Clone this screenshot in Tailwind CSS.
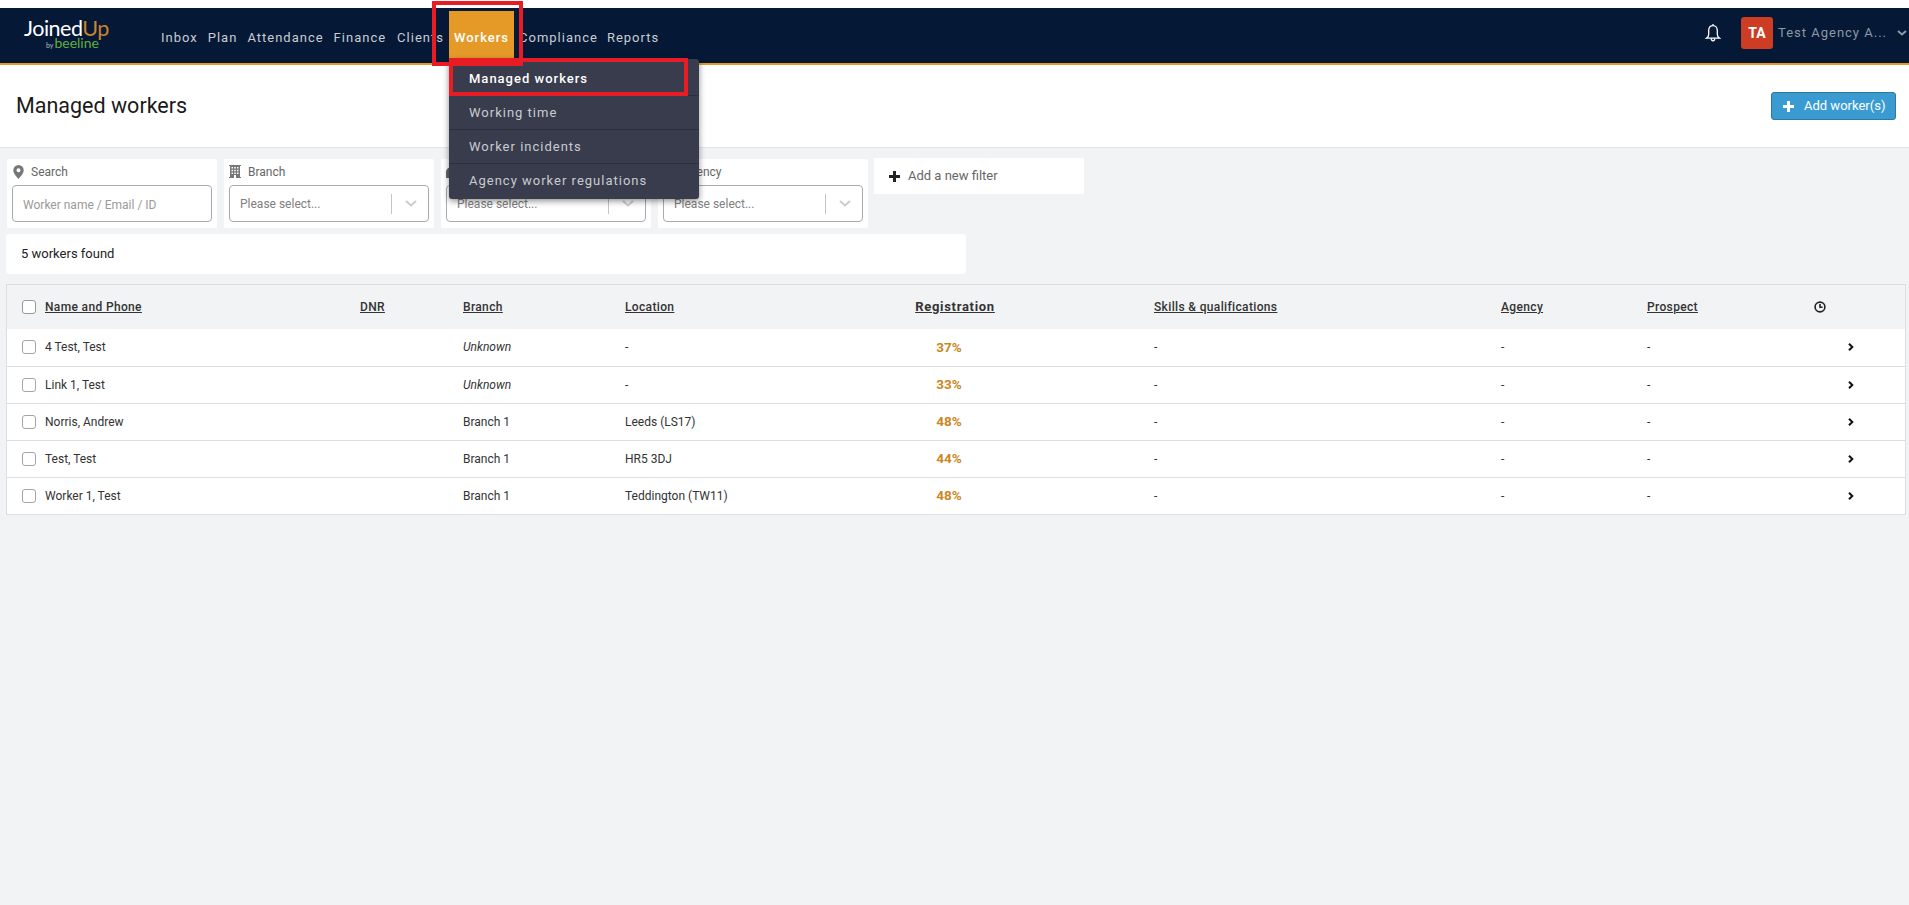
<!DOCTYPE html>
<html lang="en">
<head>
<meta charset="utf-8">
<title>Managed workers</title>
<script src="https://cdn.jsdelivr.net/npm/@tailwindcss/browser@4"></script>
</head>
<body class="relative h-[905px] overflow-hidden bg-[#f2f3f5] font-['Roboto',sans-serif] text-[12px] text-[#333]">

<div class="bg-white pt-[8px]">
  <header class="flex h-[57px] items-start border-b-2 border-[#e59a28] bg-[#051937]">
    <div class="w-[156px] shrink-0 pl-[24px] pt-[8px] font-['Lato',sans-serif]">
      <div class="text-[21.500px] leading-[24px] tracking-[-0.5px] text-white">Joined<span class="text-[#c9822e]">Up</span></div>
      <div class="ml-[22px] -mt-[3px] flex items-baseline text-[#5fae40]"><span class="text-[7px] leading-[12px] text-[#b9bec6]">by</span><span class="ml-px text-[14px] leading-[12px]">beeline</span></div>
    </div>
    <nav class="mt-[3px] flex text-[13px] tracking-[1px] text-[#c9ccd1]">
      <a class="flex h-[49px] items-center px-[5px] pt-[4px]">Inbox</a>
      <a class="flex h-[49px] items-center px-[5px] pt-[4px]">Plan</a>
      <a class="flex h-[49px] items-center px-[5px] pt-[4px]">Attendance</a>
      <a class="flex h-[49px] items-center px-[5px] pt-[4px]">Finance</a>
      <a class="ml-[1px] flex h-[49px] items-center px-[5px] pt-[4px]">Clients</a>
      <a class="flex h-[49px] items-center bg-[#e59a28] px-[5px] pt-[4px] font-medium text-white">Workers</a>
      <a class="flex h-[49px] items-center px-[5px] pt-[4px]">Compliance</a>
      <a class="-ml-[1px] flex h-[49px] items-center px-[5px] pt-[4px]">Reports</a>
    </nav>
    <div class="ml-auto flex items-center pt-[9px]">
      <svg class="h-[20px] w-[16px]" viewBox="0 0 16 20" fill="none" stroke="#fff" stroke-width="1.3"><path d="M8 1v1.600M8 2.600c-2.800 0-4.300 2.200-4.300 5v3.600c0 2-1 3.200-2.400 4h13.400c-1.400-.8-2.400-2-2.400-4V7.600c0-2.800-1.500-5-4.300-5z"/><path d="M6.300 15.500c0 1.300.7 2.300 1.700 2.300s1.700-1 1.700-2.300"/></svg>
      <div class="ml-[20px] flex h-[32px] w-[32px] items-center justify-center rounded-[3px] bg-[#cc3d24] text-[14px] font-bold text-white">TA</div>
      <div class="ml-[5px] w-[119px] whitespace-nowrap text-[13px] tracking-[1px] text-[#8f98a4]">Test Agency A...</div>
      <svg class="mr-[2px] h-[6px] w-[10px]" viewBox="0 0 10 6" fill="none" stroke="#8f98a4" stroke-width="2"><path d="M1 1l4 3.500L9 1"/></svg>
    </div>
  </header>
</div>

<section class="flex h-[83px] items-center justify-between border-b border-[#e3e4e6] bg-white pl-[16px] pr-[13px]">
  <h1 class="text-[21.500px] font-normal text-[#1a1a1a]">Managed workers</h1>
  <button class="flex h-[28px] w-[125px] items-center rounded-[3px] border border-[#2f7a93] bg-[#3a9bd3] pl-[11px] text-[13px] text-white">
    <svg class="h-[11px] w-[11px]" viewBox="0 0 11 11" fill="#fff"><path d="M4 0h3v4h4v3H7v4H4V7H0V4h4z"/></svg>
    <span class="ml-[10px]">Add worker(s)</span>
  </button>
</section>

<section class="ml-[7px] mt-[11px] flex items-start gap-[7px]">
  <div class="h-[69px] w-[210px] rounded-[2px] bg-white px-[5px] pt-[2px]">
    <div class="mb-[3px] flex h-[21px] items-center text-[#666]">
      <svg class="ml-[1px] h-[14px] w-[11px]" viewBox="0 0 11 14" fill="#777"><path fill-rule="evenodd" d="M5.500 0a5.200 5.200 0 0 1 5.200 5.200C10.700 8.500 7.500 11.500 5.500 14 3.500 11.500 .3 8.500 .3 5.200A5.200 5.200 0 0 1 5.500 0zm0 3.200a2 2 0 1 0 0 4 2 2 0 0 0 0-4z"/></svg>
      <span class="ml-[7px]">Search</span>
    </div>
    <div class="flex h-[37px] items-center rounded-[4px] border border-[#aaa] pl-[10px] pt-[2px] text-[12px] text-[#9a9a9a]">Worker name / Email / ID</div>
  </div>

  <div class="h-[69px] w-[210px] rounded-[2px] bg-white px-[5px] pt-[2px]">
    <div class="mb-[3px] flex h-[21px] items-center text-[#666]">
      <svg class="h-[13px] w-[12px]" viewBox="0 0 12 13" fill="#777"><path fill-rule="evenodd" d="M0 0h12v1h-1v11h1v1H7v-3H5v3H0v-1h1V1H0zM2.500 2v1.500H4V2zm2.700 0v1.500h1.600V2zM8 2v1.500h1.500V2zM2.500 4.800v1.500H4V4.800zm2.700 0v1.500h1.600V4.800zm2.800 0v1.500h1.500V4.800zM2.500 7.600v1.500H4V7.600zm2.700 0v1.500h1.600V7.600zm2.800 0v1.500h1.500V7.600z"/></svg>
      <span class="ml-[7px]">Branch</span>
    </div>
    <div class="flex h-[37px] items-center rounded-[4px] border border-[#aaa] pl-[10px] text-[12px] text-[#808080]">
      <span class="w-[151px]">Please select...</span>
      <span class="h-[20px] w-px bg-[#c4c4c4]"></span>
      <svg class="ml-[13px] h-[7px] w-[12px]" viewBox="0 0 12 7" fill="none" stroke="#ccc" stroke-width="2"><path d="M1 1l5 4.500L11 1"/></svg>
    </div>
  </div>

  <div class="h-[69px] w-[210px] rounded-[2px] bg-white px-[5px] pt-[2px]">
    <div class="mb-[3px] flex h-[21px] items-center text-[#666]">
      <svg class="h-[13px] w-[12px]" viewBox="0 0 12 13" fill="#666"><path d="M0 7a6 5 0 0 1 12 0v6H0z"/></svg>
      <span class="ml-[6px]">Location</span>
    </div>
    <div class="flex h-[37px] items-center rounded-[4px] border border-[#aaa] pl-[10px] text-[12px] text-[#808080]">
      <span class="w-[151px]">Please select...</span>
      <span class="h-[20px] w-px bg-[#c4c4c4]"></span>
      <svg class="ml-[13px] h-[7px] w-[12px]" viewBox="0 0 12 7" fill="none" stroke="#ccc" stroke-width="2"><path d="M1 1l5 4.500L11 1"/></svg>
    </div>
  </div>

  <div class="h-[69px] w-[210px] rounded-[2px] bg-white px-[5px] pt-[2px]">
    <div class="mb-[3px] flex h-[21px] items-center text-[#666]">
      <span class="ml-[19px]">Agency</span>
    </div>
    <div class="flex h-[37px] items-center rounded-[4px] border border-[#aaa] pl-[10px] text-[12px] text-[#808080]">
      <span class="w-[151px]">Please select...</span>
      <span class="h-[20px] w-px bg-[#c4c4c4]"></span>
      <svg class="ml-[13px] h-[7px] w-[12px]" viewBox="0 0 12 7" fill="none" stroke="#ccc" stroke-width="2"><path d="M1 1l5 4.500L11 1"/></svg>
    </div>
  </div>

  <div class="-ml-px -mt-px flex h-[36px] w-[210px] items-center bg-white pl-[15px] text-[13px] text-[#666]">
    <svg class="h-[11px] w-[11px]" viewBox="0 0 11 11" fill="#222"><path d="M4 0h3v4h4v3H7v4H4V7H0V4h4z"/></svg>
    <span class="ml-[8px]">Add a new filter</span>
  </div>
</section>

<div class="ml-[6px] mt-[6px] flex h-[40px] w-[960px] items-center rounded-[4px] bg-white pl-[15px] text-[13px] text-[#222]">5 workers found</div>

<div class="ml-[6px] mt-[10px] w-[1900px] border border-b-0 border-[#dcdee0]">
  <table class="w-full table-fixed text-left">
    <colgroup>
      <col class="w-[38px]"><col class="w-[315px]"><col class="w-[103px]"><col class="w-[162px]"><col class="w-[220px]"><col class="w-[309px]"><col class="w-[347px]"><col class="w-[146px]"><col class="w-[154px]"><col>
    </colgroup>
    <thead class="bg-[#f2f3f5]">
      <tr class="h-[44px] [&>th]:pb-[1px] [&>th]:font-medium [&>th]:tracking-[0.35px]">
        <th class="pl-[15px]"><input type="checkbox" aria-label="Select all" class="block h-[14px] w-[14px] appearance-none rounded-[3px] border-[1.500px] border-[#999] bg-white"></th>
        <th class="underline">Name and Phone</th>
        <th class="underline">DNR</th>
        <th class="underline">Branch</th>
        <th class="underline">Location</th>
        <th><div class="w-[220px] text-center text-[13px] font-bold tracking-[0.7px] underline">Registration</div></th>
        <th class="underline">Skills &amp; qualifications</th>
        <th class="underline">Agency</th>
        <th class="underline">Prospect</th>
        <th><svg class="ml-[13px] h-[12px] w-[12px]" viewBox="0 0 12 12" fill="none" stroke="#222" stroke-width="1.600"><circle cx="6" cy="6" r="4.900"/><path d="M6 3v3.200h2.600"/></svg></th>
      </tr>
    </thead>
    <tbody class="bg-white text-[#333] [&>tr]:h-[37px] [&>tr]:border-b [&>tr]:border-[#dcdee0]">
      <tr>
        <td class="pl-[15px]"><input type="checkbox" aria-label="Select" class="block h-[14px] w-[14px] appearance-none rounded-[3px] border-[1.500px] border-[#a5a5a5] bg-white"></td>
        <td>4 Test, Test</td><td></td><td class="italic">Unknown</td><td>-</td>
        <td><div class="w-[208px] text-center text-[13.500px] font-bold text-[#cc8722]">37%</div></td>
        <td>-</td><td>-</td><td>-</td>
        <td><svg class="ml-[47px] h-[8px] w-[6px]" viewBox="0 0 6 8" fill="none" stroke="#111" stroke-width="2"><path d="M1 .8L4.300 4 1 7.200"/></svg></td>
      </tr>
      <tr>
        <td class="pl-[15px]"><input type="checkbox" aria-label="Select" class="block h-[14px] w-[14px] appearance-none rounded-[3px] border-[1.500px] border-[#a5a5a5] bg-white"></td>
        <td>Link 1, Test</td><td></td><td class="italic">Unknown</td><td>-</td>
        <td><div class="w-[208px] text-center text-[13.500px] font-bold text-[#cc8722]">33%</div></td>
        <td>-</td><td>-</td><td>-</td>
        <td><svg class="ml-[47px] h-[8px] w-[6px]" viewBox="0 0 6 8" fill="none" stroke="#111" stroke-width="2"><path d="M1 .8L4.300 4 1 7.200"/></svg></td>
      </tr>
      <tr>
        <td class="pl-[15px]"><input type="checkbox" aria-label="Select" class="block h-[14px] w-[14px] appearance-none rounded-[3px] border-[1.500px] border-[#a5a5a5] bg-white"></td>
        <td>Norris, Andrew</td><td></td><td>Branch 1</td><td>Leeds (LS17)</td>
        <td><div class="w-[208px] text-center text-[13.500px] font-bold text-[#cc8722]">48%</div></td>
        <td>-</td><td>-</td><td>-</td>
        <td><svg class="ml-[47px] h-[8px] w-[6px]" viewBox="0 0 6 8" fill="none" stroke="#111" stroke-width="2"><path d="M1 .8L4.300 4 1 7.200"/></svg></td>
      </tr>
      <tr>
        <td class="pl-[15px]"><input type="checkbox" aria-label="Select" class="block h-[14px] w-[14px] appearance-none rounded-[3px] border-[1.500px] border-[#a5a5a5] bg-white"></td>
        <td>Test, Test</td><td></td><td>Branch 1</td><td>HR5 3DJ</td>
        <td><div class="w-[208px] text-center text-[13.500px] font-bold text-[#cc8722]">44%</div></td>
        <td>-</td><td>-</td><td>-</td>
        <td><svg class="ml-[47px] h-[8px] w-[6px]" viewBox="0 0 6 8" fill="none" stroke="#111" stroke-width="2"><path d="M1 .8L4.300 4 1 7.200"/></svg></td>
      </tr>
      <tr>
        <td class="pl-[15px]"><input type="checkbox" aria-label="Select" class="block h-[14px] w-[14px] appearance-none rounded-[3px] border-[1.500px] border-[#a5a5a5] bg-white"></td>
        <td>Worker 1, Test</td><td></td><td>Branch 1</td><td>Teddington (TW11)</td>
        <td><div class="w-[208px] text-center text-[13.500px] font-bold text-[#cc8722]">48%</div></td>
        <td>-</td><td>-</td><td>-</td>
        <td><svg class="ml-[47px] h-[8px] w-[6px]" viewBox="0 0 6 8" fill="none" stroke="#111" stroke-width="2"><path d="M1 .8L4.300 4 1 7.200"/></svg></td>
      </tr>
    </tbody>
  </table>
</div>

<!-- open Workers menu -->
<ul class="absolute left-[449px] top-[59px] w-[250px] divide-y divide-[#2c2f3d] rounded-[3px] bg-[#393c4d] pb-[1px] pt-[3px] text-[13px] tracking-[1px] text-[#c9cbd0] shadow-[0_2px_6px_rgba(0,0,0,0.45)] [&>li]:flex [&>li]:h-[34px] [&>li]:items-center [&>li]:pl-[20px]">
  <li class="font-medium text-white">Managed workers</li>
  <li>Working time</li>
  <li>Worker incidents</li>
  <li>Agency worker regulations</li>
</ul>

<!-- red annotation frames -->
<div class="pointer-events-none absolute left-[432px] top-[1px] h-[65px] w-[91px] border-[4px] border-[#e81c24]"></div>
<div class="pointer-events-none absolute left-[449px] top-[58px] h-[38px] w-[239px] border-[4px] border-[#e81c24]"></div>
</body>
</html>
